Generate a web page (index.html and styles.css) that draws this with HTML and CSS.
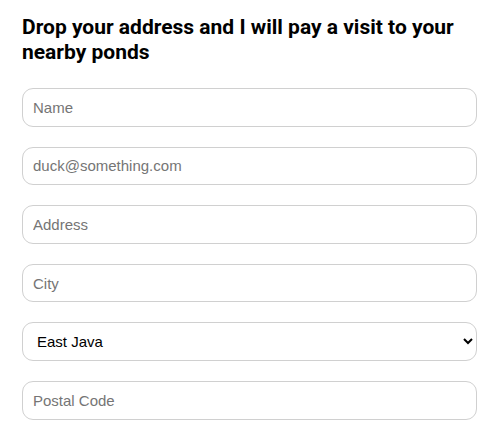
FILE: index.html
```html
<!DOCTYPE html>
<html>
<head>
<meta charset="utf-8">
<link rel="stylesheet" href="styles.css">
</head>
<body>
<form class="form">
  <h2 class="title">Drop your address and I will pay a visit to your nearby ponds</h2>
  <input class="field" type="text" placeholder="Name">
  <input class="field" type="email" placeholder="duck@something.com">
  <input class="field" type="text" placeholder="Address">
  <input class="field" type="text" placeholder="City">
  <select class="field select">
    <option>East Java</option>
    <option>West Java</option>
    <option>Central Java</option>
  </select>
  <input class="field" type="text" placeholder="Postal Code">
</form>
</body>
</html>
```
FILE: styles.css
```css
html, body {
  margin: 0;
  padding: 0;
  background: #fff;
}
.form {
  width: 455px;
  padding: 15px 0 0 22px;
  display: flex;
  flex-direction: column;
  gap: 20px;
}
.title {
  margin: 0 0 3px 0;
  font-family: Roboto, "Liberation Sans", sans-serif;
  font-weight: 700;
  font-size: 21px;
  line-height: 25px;
  color: #000;
}
.field {
  box-sizing: border-box;
  width: 455px;
  height: 38.6px;
  margin: 0;
  padding: 0 10px;
  border: 1px solid #d0d0d0;
  border-radius: 11px;
  font-family: "Liberation Sans", Arial, sans-serif;
  font-size: 15px;
  color: #000;
  background: #fff;
  outline: none;
}
.field::placeholder {
  color: #757575;
}
.select {
  padding: 0 10px 0 10px;
}
```
